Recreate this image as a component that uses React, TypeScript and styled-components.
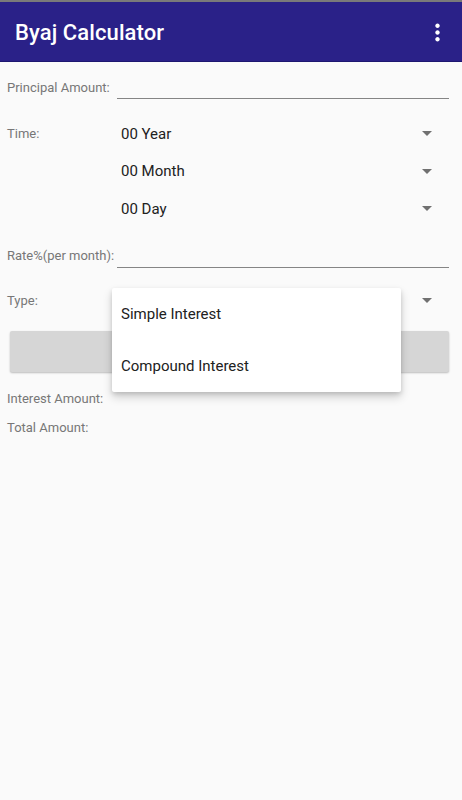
import * as React from "react";
import styled, {createGlobalStyle} from "styled-components";

const GlobalStyle = createGlobalStyle`
  html, body {
    margin: 0;
    padding: 0;
    background: #fafafa;
  }
  body {
    font-family: Roboto, "Liberation Sans", sans-serif;
  }
`

const Screen = styled.div`
  width: 462px;
  height: 800px;
  background: #fafafa;
  overflow: hidden;
`

const StatusLine = styled.div`
  height: 2px;
  background: #7a7a7a;
`

const Toolbar = styled.header`
  height: 59px;
  background: #2a2188;
  border-bottom: 1px solid #1d1770;
  display: flex;
  align-items: center;
  justify-content: space-between;
  padding: 1px 11px 0 15px;
  box-sizing: border-box;
  height: 60px;
`

const Title = styled.h1`
  margin: 0;
  color: #fff;
  font-size: 22px;
  font-weight: 500;
  letter-spacing: 0.1px;
`

const MenuIcon = styled.svg`
  width: 27px;
  height: 27px;
  fill: #fff;
`

const Form = styled.main`
  position: relative;
  display: flex;
  flex-direction: column;
  padding: 0 13px 0 7px;
`

const Row = styled.div<{ height: number, top?: number }>`
  display: flex;
  align-items: center;
  height: ${({height}) => height}px;
  margin-top: ${({top}) => top || 0}px;
`

const Label = styled.label<{ alignTop?: boolean }>`
  width: 110px;
  flex-shrink: 0;
  font-size: 13px;
  color: #777;
  align-self: ${({alignTop}) => alignTop ? 'flex-start' : 'center'};
  line-height: ${({alignTop}) => alignTop ? '37.5px' : 'normal'};
`

const TextField = styled.div`
  flex: 1;
  height: 23px;
  border-bottom: 1px solid #858585;
`

const SpinnerGroup = styled.div`
  flex: 1;
  display: flex;
  flex-direction: column;
  position: relative;
`

const Spinner = styled.div`
  height: 37.5px;
  display: flex;
  align-items: center;
  justify-content: space-between;
  padding: 0 17px 0 4px;
  font-size: 15px;
  color: #212121;
`

const Arrow = styled.span`
  width: 0;
  height: 0;
  border-left: 5px solid transparent;
  border-right: 5px solid transparent;
  border-top: 5px solid #707070;
`

const CalcButton = styled.button`
  height: 41px;
  margin: 11px 0 0 3px;
  border: none;
  border-radius: 2px;
  background: #d6d6d6;
  box-shadow: 0 1px 2px rgba(0, 0, 0, 0.25);
`

const ResultLabel = styled.div<{ top: number }>`
  height: 22px;
  line-height: 22px;
  margin-top: ${({top}) => top}px;
  font-size: 13px;
  color: #777;
`

const Popup = styled.ul`
  position: absolute;
  top: 6px;
  left: -5px;
  width: 289px;
  margin: 0;
  padding: 0;
  list-style: none;
  background: #fff;
  border-radius: 2px;
  box-shadow: 0 5px 10px rgba(0, 0, 0, 0.18), 0 2px 4px rgba(0, 0, 0, 0.12);
  z-index: 2;
`

const PopupItem = styled.li`
  height: 52px;
  display: flex;
  align-items: center;
  padding-left: 9px;
  font-size: 15px;
  color: #212121;
`

const times = ['00 Year', '00 Month', '00 Day']

export default function App() {
  return (
    <Screen>
      <GlobalStyle/>
      <StatusLine/>
      <Toolbar>
        <Title>Byaj Calculator</Title>
        <MenuIcon viewBox="0 0 24 24">
          <path
            d="M12 8c1.1 0 2-.9 2-2s-.9-2-2-2-2 .9-2 2 .9 2 2 2zm0 2c-1.1 0-2 .9-2 2s.9 2 2 2 2-.9 2-2-.9-2-2-2zm0 6c-1.1 0-2 .9-2 2s.9 2 2 2 2-.9 2-2-.9-2-2-2z"/>
        </MenuIcon>
      </Toolbar>
      <Form>
        <Row height={50}>
          <Label>Principal Amount:</Label>
          <TextField/>
        </Row>
        <Row height={112.5} top={2.75}>
          <Label alignTop>Time:</Label>
          <SpinnerGroup>
            {times.map(t => (
              <Spinner key={t}>{t}<Arrow/></Spinner>
            ))}
          </SpinnerGroup>
        </Row>
        <Row height={50} top={3.5}>
          <Label>Rate%(per month):</Label>
          <TextField/>
        </Row>
        <Row height={38} top={1}>
          <Label>Type:</Label>
          <SpinnerGroup>
            <Spinner><span/><Arrow/></Spinner>
            <Popup>
              <PopupItem>Simple Interest</PopupItem>
              <PopupItem>Compound Interest</PopupItem>
            </Popup>
          </SpinnerGroup>
        </Row>
        <CalcButton/>
        <ResultLabel top={16}>Interest Amount:</ResultLabel>
        <ResultLabel top={7}>Total Amount:</ResultLabel>
      </Form>
    </Screen>
  )
}
